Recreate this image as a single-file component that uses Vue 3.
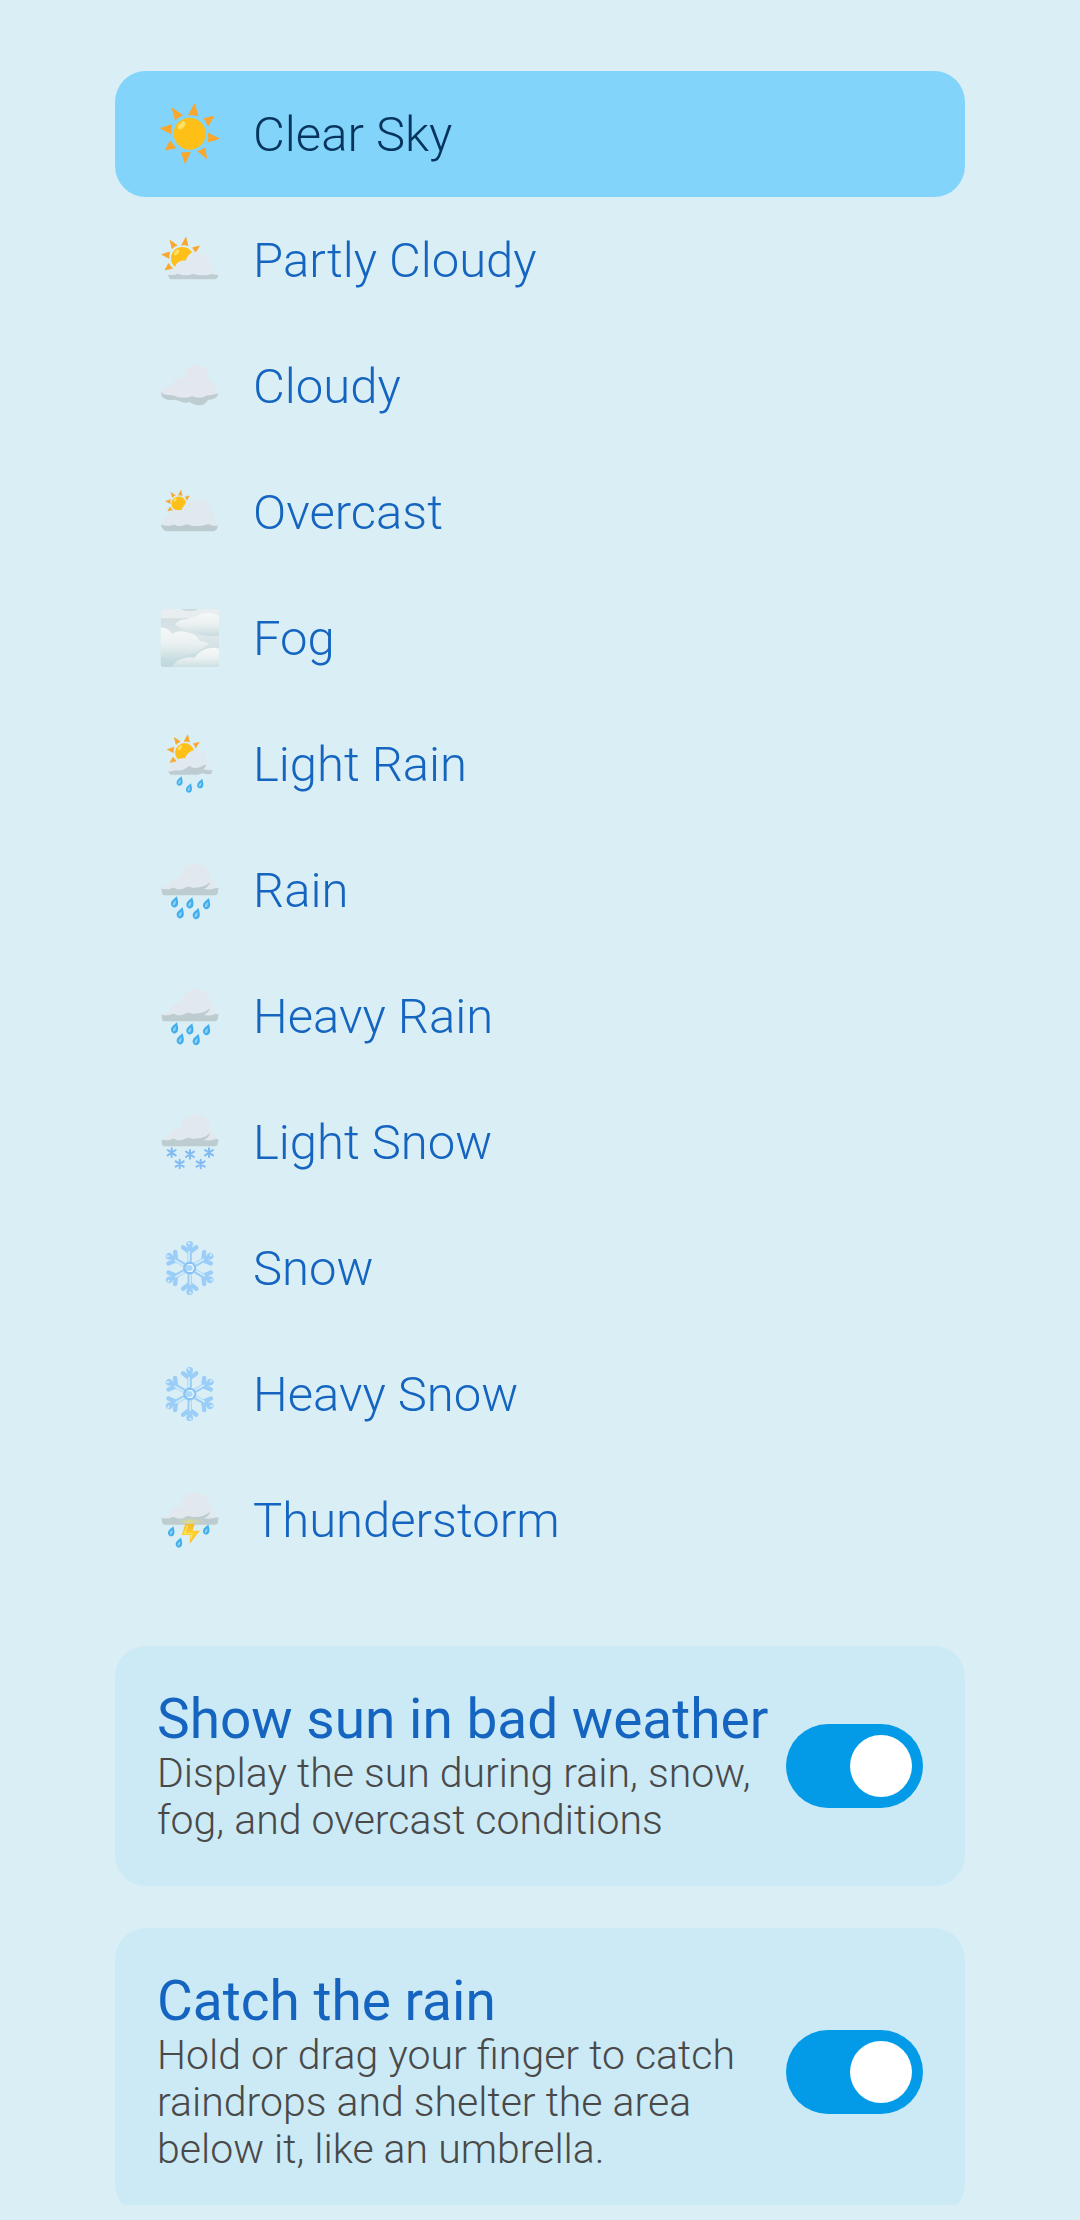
<script setup>
import { ref } from "vue";

const conditions = [
  { id: "clear", name: "Clear Sky", box: "51 36 192 192" },
  { id: "partly", name: "Partly Cloudy", box: "51 54 192 192" },
  { id: "cloudy", name: "Cloudy", box: "51 54 192 192" },
  { id: "overcast", name: "Overcast", box: "51 60 192 192" },
  { id: "fog", name: "Fog", box: "51 48 192 192" },
  { id: "light-rain", name: "Light Rain", box: "51 51 192 192" },
  { id: "rain", name: "Rain", box: "51 39 192 192" },
  { id: "heavy-rain", name: "Heavy Rain", icon: "rain", box: "51 39 192 192" },
  { id: "light-snow", name: "Light Snow", box: "51 45 192 192" },
  { id: "snow", name: "Snow", box: "-98 -96 192 192" },
  { id: "heavy-snow", name: "Heavy Snow", icon: "snow", box: "-98 -96 192 192" },
  { id: "thunderstorm", name: "Thunderstorm", box: "51 54 192 192" },
];

const selected = ref("clear");

const options = ref([
  {
    id: "show-sun",
    title: "Show sun in bad weather",
    text: "Display the sun during rain, snow, fog, and overcast conditions",
    enabled: true,
  },
  {
    id: "catch-rain",
    title: "Catch the rain",
    text: "Hold or drag your finger to catch raindrops and shelter the area below it, like an umbrella.",
    enabled: true,
  },
]);
</script>

<template>
  <!-- shared icon shapes -->
  <svg class="defs" aria-hidden="true">
    <defs>
      <radialGradient id="sun-fill" cx="0.6" cy="0.6" r="0.6">
        <stop offset="0" stop-color="#ffc114" />
        <stop offset="1" stop-color="#fdbf1b" />
      </radialGradient>
      <linearGradient id="fog-fill" x1="0" y1="0" x2="0" y2="1">
        <stop offset="0" stop-color="#cddbe0" />
        <stop offset="0.5" stop-color="#dde6e9" />
        <stop offset="1" stop-color="#bfd8dc" />
      </linearGradient>
      <linearGradient id="fog-cloud" x1="0" y1="0" x2="0" y2="1">
        <stop offset="0" stop-color="#f6f8f9" />
        <stop offset="0.5" stop-color="#eaf0f1" />
        <stop offset="1" stop-color="#c8dde0" />
      </linearGradient>
      <radialGradient id="glow">
        <stop offset="0" stop-color="#e6de72" />
        <stop offset="1" stop-color="#c4d0cf" stop-opacity="0" />
      </radialGradient>
      <linearGradient id="bolt-fill" x1="0" y1="0" x2="0" y2="1">
        <stop offset="0" stop-color="#f5ba27" />
        <stop offset="0.5" stop-color="#ffd02e" />
        <stop offset="1" stop-color="#fbb52a" />
      </linearGradient>
      <g id="half-sun">
        <g fill="#fba62c" stroke="#fba62c" stroke-width="3" stroke-linejoin="round">
          <path d="M15-89 24-54Q10-59-3-56Z" />
          <path d="M-52-76-22-55Q-35-51-43-41Z" />
          <path d="M72-52 55-23Q52-36 43-45Z" />
          <path d="M-87-16-54-27Q-58-13-56 0Z" />
          <path d="M-73 49-58 22Q-52 34-41 42Z" />
        </g>
        <circle r="48" fill="url(#sun-fill)" />
        <ellipse cx="-24" cy="-25" rx="8" ry="14" fill="#ffe163" transform="rotate(38 -24 -25)" />
      </g>
      <g id="sun">
        <g fill="#fba62c" stroke="#fba62c" stroke-width="3" stroke-linejoin="round">
          <path d="M88 15 56-1Q59 12 56 24Z" />
          <path d="M-14 88-24 57Q-12 60 2 55Z" />
          <path d="M51 74 25 53Q38 50 45 43Z" />
        </g>
        <use href="#half-sun" />
      </g>
      <g id="drop">
        <path d="M7-17C-3-9-12-2-11 7C-9 19 7 20 10 7C12-1 8-9 7-17Z" fill="#42aeec" />
        <path d="M3-5C-2 0-6 4-5 9C-3 12 1 10 2 6C4 2 4-1 3-5Z" fill="#91d6f8" />
      </g>
      <g id="flake" stroke="#82bbf2" stroke-width="6" stroke-linecap="round">
        <path d="M0-13V13M-12-8 12 8M-12 8 12-8" />
      </g>
      <g id="arm" fill="none" stroke-linecap="round" stroke-linejoin="round">
        <path d="M0-20V-72M0-47-20-62M0-47 20-62" stroke="#9acdf7" stroke-width="13" />
        <circle cy="-71" r="10" fill="#9acdf7" />
        <path d="M-2-22V-49M-3-76-1-73" stroke="#d6eefc" stroke-width="5" />
      </g>
      <g id="rain-cloud">
        <path d="M64 134C70 121 79 122 88 123C88 106 104 94 121 96C126 70 146 51 171 55C199 57 212 79 211 99C222 105 223 120 234 134Z" fill="#e1e9ef" />
        <path d="M64 131Q79 134 91 132Q99 124 109 132Q121 135 132 130Q142 121 157 128Q190 130 210 112Q207 126 191 132Q208 135 220 131Q227 128 236 130L232 148Q229 151 223 151H74Q69 151 67 147Z" fill="#bdcccf" />
      </g>
    </defs>
  </svg>

  <main class="screen">
    <div class="content">
      <div class="conditions" role="radiogroup" aria-label="Weather">
        <label v-for="item in conditions" :key="item.id" class="condition" :class="{ active: selected === item.id }">
          <input v-model="selected" type="radio" name="weather" :value="item.id" />
          <svg class="icon" :viewBox="item.box" aria-hidden="true">
            <use v-if="item.id === 'clear'" href="#sun" x="149" y="131" />

            <g v-else-if="item.id === 'partly'">
              <use href="#half-sun" transform="translate(127 145) scale(0.71)" />
              <path d="M86 197C87 183 94 177 105 174C107 156 124 150 137 152C143 135 154 122 177 125C200 128 211 145 211 161C223 167 223 184 234 197Z" fill="#e0eaf0" />
              <path d="M84 194Q98 196 106 194Q114 189 122 194Q138 197 151 194Q160 189 171 195Q190 197 205 195Q216 189 224 194L235 195Q234 206 224 208H94Q87 206 84 194Z" fill="#bdcdd2" />
            </g>

            <g v-else-if="item.id === 'cloudy'">
              <path d="M63 171C69 154 82 148 96 149C100 130 115 121 132 124C137 98 152 84 171 86C197 88 207 108 206 132C222 137 225 160 235 176L220 188L188 190L165 196L145 190L115 189L80 185Z" fill="#e2e8ee" />
              <path d="M63 168Q72 178 88 177Q104 177 113 183Q132 187 148 184Q154 178 164 183Q178 187 190 183Q203 176 214 177Q225 176 235 172Q232 187 217 190L204 192Q195 208 179 208Q158 207 149 198Q133 204 116 194L104 191Q86 194 76 189Q63 184 63 168Z" fill="#becdd1" />
            </g>

            <g v-else-if="item.id === 'overcast'">
              <use href="#half-sun" transform="translate(116 131) scale(0.45)" />
              <path d="M63 199C65 180 74 170 87 166C90 151 108 148 124 151C135 126 150 116 169 120C192 115 210 132 211 151C225 157 224 184 234 201Z" fill="#e0e9ee" />
              <path d="M63 193Q75 199 91 197Q101 191 111 197Q123 199 133 195Q143 189 154 197Q177 200 193 196Q205 190 214 196Q226 200 234 196Q232 212 220 214H81Q66 213 63 193Z" fill="#bccbcf" />
            </g>

            <g v-else-if="item.id === 'fog'">
              <clipPath id="fog-clip"><rect x="62" y="56" width="175" height="175" rx="10" /></clipPath>
              <g clip-path="url(#fog-clip)">
                <path d="M62 56H237V231H62Z" fill="url(#fog-fill)" />
                <path d="M62 56H118Q145 68 169 61L175 56H237V85H62Z" fill="#e8eef0" />
                <path d="M105 102Q120 86 142 88Q151 80 164 84Q180 67 205 70Q224 68 243 81V137Q195 142 160 125Q125 122 105 102Z" fill="url(#fog-cloud)" />
                <path d="M57 114Q79 108 96 131Q118 119 142 127Q171 132 179 153Q193 152 207 162Q183 178 165 189L96 209L57 200Z" fill="url(#fog-cloud)" />
                <path d="M95 231Q109 207 136 204Q151 199 163 204Q181 178 207 175Q225 171 240 177V235Z" fill="url(#fog-cloud)" />
              </g>
            </g>

            <g v-else-if="item.id === 'light-rain'">
              <use href="#half-sun" transform="translate(134 113) scale(0.6)" />
              <path d="M85 173C88 152 97 145 108 142C110 130 124 129 135 130C143 111 158 102 177 106C195 108 203 123 200 142C211 148 211 163 216 173Z" fill="#e0e9ef" />
              <path d="M84 169Q98 170 107 166Q117 168 129 164Q141 158 148 152Q155 160 170 159Q183 156 197 148Q198 158 190 163Q202 167 217 165L214 177L201 178L188 175L174 179H91Z" fill="#becbd0" />
              <use href="#drop" transform="translate(119 198) scale(0.85)" />
              <use href="#drop" transform="translate(147 219) scale(0.85)" />
              <use href="#drop" transform="translate(181 206) scale(0.85)" />
            </g>

            <g v-else-if="item.icon === 'rain' || item.id === 'rain'">
              <use href="#rain-cloud" />
              <use href="#drop" x="104" y="171" />
              <use href="#drop" x="150" y="174" />
              <use href="#drop" x="200" y="176" />
              <use href="#drop" x="121" y="204" />
              <use href="#drop" x="169" y="206" />
            </g>

            <g v-else-if="item.id === 'light-snow'">
              <use href="#rain-cloud" y="3" />
              <use href="#flake" x="95" y="173" />
              <use href="#flake" x="150" y="178" />
              <use href="#flake" x="207" y="173" />
              <use href="#flake" x="119" y="207" />
              <use href="#flake" x="182" y="207" />
            </g>

            <g v-else-if="item.icon === 'snow' || item.id === 'snow'">
              <use v-for="n in 6" :key="n" href="#arm" :transform="`rotate(${n * 60})`" />
              <path d="M-9-15H9L18 0 9 15H-9L-18 0Z" fill="#a9d7f8" stroke="#83bdf1" stroke-width="4" stroke-linejoin="round" />
              <path d="M-6-10H6L12 0 6 10H-6" fill="none" stroke="#e5f6fe" stroke-width="4" stroke-linejoin="round" />
            </g>

            <g v-else>
              <use href="#rain-cloud" y="13" />
              <ellipse cx="150" cy="155" rx="47" ry="13" fill="url(#glow)" />
              <path d="M136 162H164L158 182H180L149 221L151 195H125Z" fill="url(#bolt-fill)" />
              <path d="M142 166 134 190H156L154 207" fill="none" stroke="#ffe25b" stroke-width="4" />
              <use href="#drop" transform="translate(94 184) scale(0.9)" />
              <use href="#drop" transform="translate(199 179) scale(0.9)" />
              <use href="#drop" transform="translate(117 218) scale(0.9)" />
            </g>
          </svg>
          <span>{{ item.name }}</span>
        </label>
      </div>

      <section v-for="option in options" :key="option.id" class="card">
        <div class="card-text">
          <label :for="option.id">{{ option.title }}</label>
          <p :id="option.id + '-text'">{{ option.text }}</p>
        </div>
        <input
          :id="option.id"
          v-model="option.enabled"
          class="switch"
          type="checkbox"
          role="switch"
          :aria-describedby="option.id + '-text'"
        />
      </section>
    </div>
  </main>
</template>

<style>
body {
  background: #daeef5;
}
</style>

<style scoped>
.defs {
  position: absolute;
  width: 0;
  height: 0;
}
.screen {
  display: flex;
  box-sizing: border-box;
  height: 100vh;
  padding-bottom: 15px;
  font-family: Roboto, "Liberation Sans", sans-serif;
  font-weight: 300;
  color: #1565c0;
}
.content {
  flex: 1;
  padding: 71px 115px 0;
  overflow: hidden;
}
.conditions {
  margin-bottom: 63px;
}
.condition {
  display: flex;
  align-items: center;
  gap: 32px;
  position: relative;
  height: 126px;
  padding: 0 42px;
  border-radius: 31px;
  font-size: 49px;
  cursor: pointer;
}
.condition input {
  position: absolute;
  opacity: 0;
}
.condition.active {
  background: #82d4fb;
  color: #06345c;
}
.icon {
  flex: none;
  width: 64px;
  height: 64px;
}
.card {
  display: flex;
  align-items: center;
  gap: 16px;
  margin-bottom: 42px;
  padding: 42px;
  border-radius: 31px;
  background: #cceaf5;
}
.card-text {
  flex: 1;
}
.card-text label {
  display: block;
  font-size: 55px;
  font-weight: 400;
  line-height: 62px;
}
.card-text p {
  margin: 0;
  font-size: 41px;
  line-height: 47px;
  color: #494949;
}
.switch {
  appearance: none;
  flex: none;
  width: 137px;
  height: 84px;
  margin: 0;
  padding: 11px;
  box-sizing: border-box;
  border-radius: 42px;
  background: #90a4ae;
  cursor: pointer;
}
.switch::before {
  content: "";
  display: block;
  width: 62px;
  height: 62px;
  border-radius: 50%;
  background: #fff;
}
.switch:checked {
  background: #039be7;
}
.switch:checked::before {
  margin-left: auto;
}
</style>
